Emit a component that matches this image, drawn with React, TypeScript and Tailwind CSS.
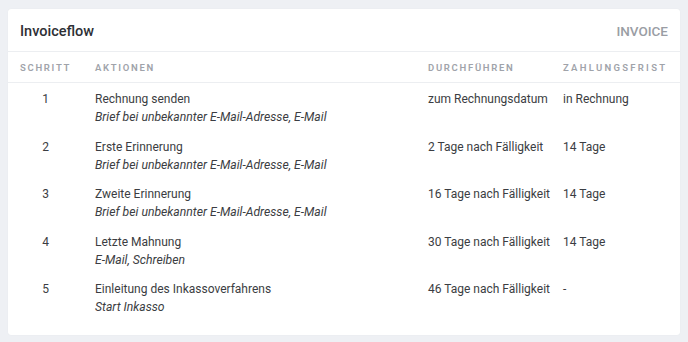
const rows = [
  { step: 1, action: "Rechnung senden", detail: "Brief bei unbekannter E-Mail-Adresse, E-Mail", when: "zum Rechnungsdatum", term: "in Rechnung" },
  { step: 2, action: "Erste Erinnerung", detail: "Brief bei unbekannter E-Mail-Adresse, E-Mail", when: "2 Tage nach Fälligkeit", term: "14 Tage" },
  { step: 3, action: "Zweite Erinnerung", detail: "Brief bei unbekannter E-Mail-Adresse, E-Mail", when: "16 Tage nach Fälligkeit", term: "14 Tage" },
  { step: 4, action: "Letzte Mahnung", detail: "E-Mail, Schreiben", when: "30 Tage nach Fälligkeit", term: "14 Tage" },
  { step: 5, action: "Einleitung des Inkassoverfahrens", detail: "Start Inkasso", when: "46 Tage nach Fälligkeit", term: "-" },
];

const cols = "grid grid-cols-[75px_333px_135px_1fr]";

export default function App() {
  return (
    <div className="min-h-[342px] w-[688px] bg-[#eef0f4] px-2 pt-[9px] pb-[7px] font-['Roboto',sans-serif]">
      <div className="rounded-[3px] bg-white shadow-[0_0_1px_rgba(0,0,0,0.08)]">
        <div className="flex h-[43px] items-center justify-between border-b border-[#eceef1] px-3 pt-[3px]">
          <h2 className="text-[14.5px] font-medium text-[#2e3035]">Invoiceflow</h2>
          <span className="text-[13.5px] font-medium text-[#9a9da4]">INVOICE</span>
        </div>
        <div className={`${cols} h-[31px] items-center border-b border-[#eceef1] pt-[2px] text-[9.5px] font-semibold tracking-[0.18em] text-[#a0a3aa]`}>
          <div className="pl-3">SCHRITT</div>
          <div className="pl-3">AKTIONEN</div>
          <div className="pl-3">DURCHFÜHREN</div>
          <div className="pl-3 tracking-[0.24em]">ZAHLUNGSFRIST</div>
        </div>
        <div className="pb-[14px]">
          {rows.map((r) => (
            <div key={r.step} className={`${cols} h-[47.5px] pt-[7px] text-[12px] leading-[18px] text-[#3b3d42]`}>
              <div className="pl-3">
                <div className="w-[51px] text-center">{r.step}</div>
              </div>
              <div className="pl-3">
                <div>{r.action}</div>
                <div className="text-[12.2px] italic">{r.detail}</div>
              </div>
              <div className="pl-3">{r.when}</div>
              <div className="pl-3">{r.term}</div>
            </div>
          ))}
        </div>
      </div>
    </div>
  );
}
